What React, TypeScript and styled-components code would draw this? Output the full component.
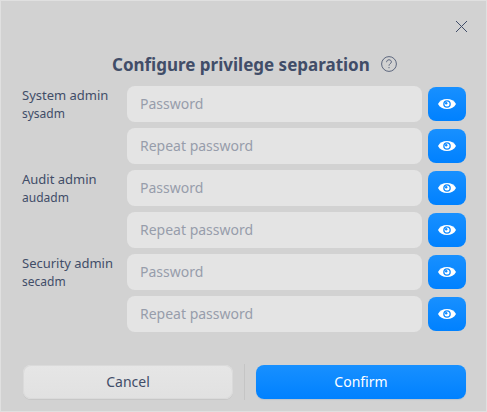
import React from "react";
import styled, { createGlobalStyle } from "styled-components";

const GlobalStyle = createGlobalStyle`
  * { box-sizing: border-box; }
  body { margin: 0; background: #d2d2d2; font-family: "Noto Sans", sans-serif; }
`;

const Dialog = styled.main`
  width: 487px;
  height: 412px;
  padding: 0 20px 0 21px;
  border: 1px solid #e0e0e0;
  background: #d2d2d2;
  color: #414d68;
  display: flex;
  flex-direction: column;
`;

const TitleBar = styled.div`
  height: 50px;
  flex: none;
  display: flex;
  justify-content: flex-end;
`;

const CloseButton = styled.button`
  width: 11px;
  height: 11px;
  margin: 20px -1px 0 0;
  padding: 0;
  border: 0;
  background: none;
  color: #414d68;
  svg { display: block; }
`;

const Heading = styled.header`
  height: 35px;
  flex: none;
  display: flex;
  align-items: flex-start;
  padding-left: 90px;
`;

const Title = styled.h1`
  width: 269px;
  margin: 0;
  font-size: 17px;
  line-height: 28px;
  font-weight: 700;
  white-space: nowrap;
`;

const HelpIcon = styled.svg`
  width: 16px;
  height: 16px;
  margin-top: 5px;
`;

const Accounts = styled.div`
  display: grid;
  gap: 6px;
`;

const Account = styled.section`
  display: grid;
  grid-template-columns: 105px 1fr;
`;

const AccountLabel = styled.div`
  font-size: 13px;
  line-height: 18px;
  white-space: nowrap;
`;

const AccountId = styled.div`
  font-size: 12px;
  line-height: 20px;
`;

const Fields = styled.div`
  display: grid;
  gap: 6px;
`;

const PasswordRow = styled.div`
  height: 36px;
  display: flex;
  align-items: center;
  gap: 6px;
`;

const PasswordInput = styled.input`
  width: 295px;
  height: 36px;
  padding: 0 13px 2px;
  border: 0;
  border-radius: 8px;
  background: #e4e4e4;
  color: #414d68;
  font: 14px "Noto Sans", sans-serif;
  outline: none;
  &::placeholder { color: #979dab; opacity: 1; }
`;

const RevealButton = styled.button`
  width: 38px;
  height: 34px;
  padding: 0;
  border: 0;
  border-radius: 8px;
  display: flex;
  align-items: center;
  justify-content: center;
  background: linear-gradient(#1890ff, #0081ff);
`;

const Actions = styled.footer`
  display: flex;
  align-items: center;
  height: 36px;
  margin-top: 32px;
  padding-left: 1px;
`;

const Divider = styled.div`
  width: 1px;
  height: 36px;
  margin: 0 11px;
  background: #c5c5c5;
`;

const ActionButton = styled.button<{ $primary?: boolean }>`
  width: 210px;
  height: 34px;
  padding: 0 0 2px;
  border: 0;
  border-radius: 8px;
  font: 14px "Noto Sans", sans-serif;
  color: ${(p) => (p.$primary ? "#ffffff" : "#414d68")};
  background: ${(p) =>
    p.$primary ? "linear-gradient(#1890ff, #0081ff)" : "linear-gradient(#e6e6e6, #e1e1e1)"};
  box-shadow: ${(p) =>
    p.$primary
      ? "0 1px 1px rgba(0, 95, 190, 0.12)"
      : "inset 0 0 0 1px #dadada, 0 1px 0 #c7c7c7"};
`;

const accounts = [
  { name: "System admin", id: "sysadm" },
  { name: "Audit admin", id: "audadm" },
  { name: "Security admin", id: "secadm" },
];

function EyeIcon() {
  return (
    <svg width="18" height="10" viewBox="0 0 18 10">
      <path d="M0 5C1.600 1.800 5 0 9 0s7.400 1.800 9 5c-1.600 3.200-5 5-9 5S1.600 8.200 0 5Z" fill="#fff" />
      <circle cx="9" cy="5" r="3.800" fill="#0d89ff" />
      <circle cx="9" cy="5" r="2.500" fill="#fff" />
      <circle cx="8.200" cy="4.300" r="1.200" fill="#0d89ff" />
    </svg>
  );
}

function PasswordField({ placeholder }: { placeholder: string }) {
  return (
    <PasswordRow>
      <PasswordInput type="password" placeholder={placeholder} />
      <RevealButton type="button" aria-label="Show password">
        <EyeIcon />
      </RevealButton>
    </PasswordRow>
  );
}

export default function App() {
  return (
    <>
      <GlobalStyle />
      <Dialog>
        <TitleBar>
          <CloseButton aria-label="Close">
            <svg width="11" height="11" viewBox="0 0 11 11" shapeRendering="crispEdges">
              <path d="M0 0 11 11M11 0 0 11" stroke="currentColor" />
            </svg>
          </CloseButton>
        </TitleBar>
        <Heading>
          <Title>Configure privilege separation</Title>
          <HelpIcon viewBox="0 0 16 16" fill="none" stroke="#5c667d">
            <circle cx="8" cy="8" r="7.4" />
            <path d="M5.600 6.200C5.600 4.700 6.600 3.800 8 3.800s2.400.9 2.400 2.100C10.400 7.600 8 7.700 8 9.700M8 11v1.200" />
          </HelpIcon>
        </Heading>
        <Accounts>
          {accounts.map(({ name, id }) => (
            <Account key={id}>
              <AccountLabel>
                {name}
                <AccountId>{id}</AccountId>
              </AccountLabel>
              <Fields>
                <PasswordField placeholder="Password" />
                <PasswordField placeholder="Repeat password" />
              </Fields>
            </Account>
          ))}
        </Accounts>
        <Actions>
          <ActionButton>Cancel</ActionButton>
          <Divider />
          <ActionButton $primary>Confirm</ActionButton>
        </Actions>
      </Dialog>
    </>
  );
}
